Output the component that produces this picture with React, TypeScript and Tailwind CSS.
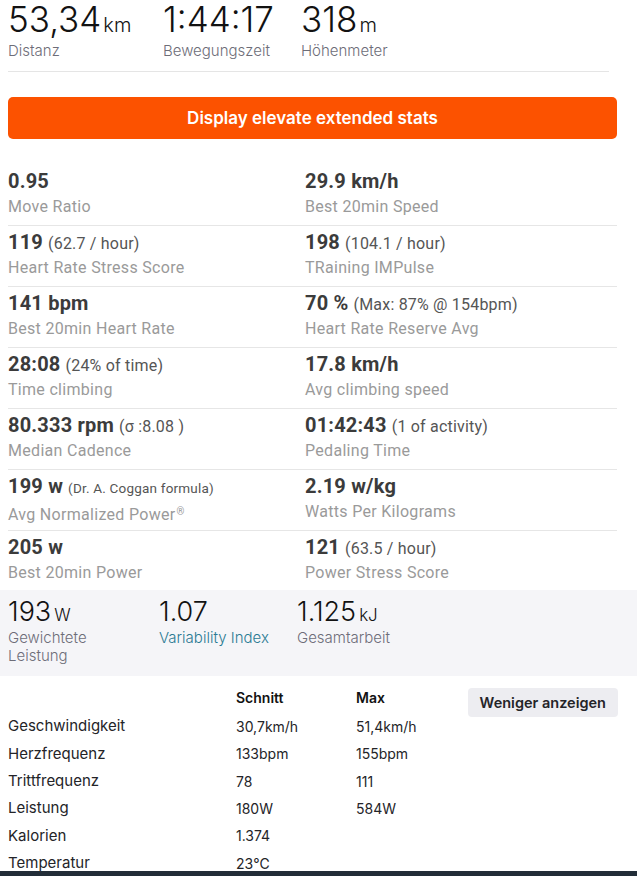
import React from 'react';

type Stat = { value: string; extra?: string; extraSmall?: boolean; label: React.ReactNode };

const ROWS: [Stat, Stat][] = [
  [
    { value: '0.95', label: 'Move Ratio' },
    { value: '29.9 km/h', label: 'Best 20min Speed' },
  ],
  [
    { value: '119', extra: '(62.7 / hour)', label: 'Heart Rate Stress Score' },
    { value: '198', extra: '(104.1 / hour)', label: 'TRaining IMPulse' },
  ],
  [
    { value: '141 bpm', label: 'Best 20min Heart Rate' },
    { value: '70 %', extra: '(Max: 87% @ 154bpm)', label: 'Heart Rate Reserve Avg' },
  ],
  [
    { value: '28:08', extra: '(24% of time)', label: 'Time climbing' },
    { value: '17.8 km/h', label: 'Avg climbing speed' },
  ],
  [
    { value: '80.333 rpm', extra: '(σ :8.08 )', label: 'Median Cadence' },
    { value: '01:42:43', extra: '(1 of activity)', label: 'Pedaling Time' },
  ],
  [
    {
      value: '199 w',
      extra: '(Dr. A. Coggan formula)',
      extraSmall: true,
      label: (
        <>
          Avg Normalized Power<span className="text-[10px] align-[5px] ml-[1px]">®</span>
        </>
      ),
    },
    { value: '2.19 w/kg', label: 'Watts Per Kilograms' },
  ],
  [
    { value: '205 w', label: 'Best 20min Power' },
    { value: '121', extra: '(63.5 / hour)', label: 'Power Stress Score' },
  ],
];

const TABLE = [
  ['Geschwindigkeit', '30,7km/h', '51,4km/h'],
  ['Herzfrequenz', '133bpm', '155bpm'],
  ['Trittfrequenz', '78', '111'],
  ['Leistung', '180W', '584W'],
  ['Kalorien', '1.374', ''],
  ['Temperatur', '23℃', ''],
];

function ElevateCell({ s }: { s: Stat }) {
  return (
    <div className="flex-1 min-w-0">
      <div className="h-[24px] flex items-baseline whitespace-nowrap">
        <span className="text-[20px] leading-[24px] font-bold text-[#3b3b3b] tracking-[0.2px]">{s.value}</span>
        {s.extra && (
          <span
            className={`${s.extraSmall ? 'text-[13.5px]' : 'text-[16px]'} leading-[24px] text-[#555] ml-[5px] tracking-[0.2px]`}
          >
            {s.extra}
          </span>
        )}
      </div>
      <div className="mt-[4px] h-[20px] text-[16px] leading-[20px] text-[#9a9a9a] tracking-[0.3px] whitespace-nowrap">
        {s.label}
      </div>
    </div>
  );
}

export default function App() {
  return (
    <div
      className="w-[637px] h-[876px] overflow-hidden bg-white flex flex-col"
      style={{ fontFamily: 'Roboto, "Noto Sans", sans-serif' }}
    >
      {/* Strava top stats */}
      <div className="px-[8px]">
        <div
          className="flex pt-[1px] pb-[9px] border-b border-[#e5e5e5] mr-[20px]"
          style={{ fontFamily: 'Inter, Roboto, sans-serif' }}
        >
          {[
            ['53,34', 'km', 'Distanz', 'w-[155px]'],
            ['1:44:17', '', 'Bewegungszeit', 'w-[138px]'],
            ['318', 'm', 'Höhenmeter', 'w-[140px]'],
          ].map(([v, u, l, w]) => (
            <div key={l} className={w}>
              <div className="h-[36px] flex items-baseline text-[#121212] whitespace-nowrap">
                <span className="text-[35px] leading-[36px] font-light">{v}</span>
                {u && <span className="text-[20px] leading-[36px] font-light ml-[2px]">{u}</span>}
              </div>
              <div className="mt-[3px] h-[22px] text-[15px] leading-[22px] text-[#6d6d78] font-light">{l}</div>
            </div>
          ))}
        </div>

        <button
          className="mt-[25px] w-[609px] h-[42px] rounded-[5px] bg-[#fc5200] text-white text-[17px] leading-[42px] font-semibold"
          style={{ fontFamily: 'Inter, Roboto, sans-serif' }}
        >
          Display elevate extended stats
        </button>

        {/* Elevate rows */}
        <div className="mt-[26px] w-[609px]">
          {ROWS.map((r, i) => (
            <div
              key={i}
              className={`flex pt-[4px] ${i < ROWS.length - 1 ? 'pb-[8px] border-b border-[#e6e6e6]' : 'pb-[7px]'}`}
            >
              <ElevateCell s={r[0]} />
              <div className="w-[312px]">
                <ElevateCell s={r[1]} />
              </div>
            </div>
          ))}
        </div>
      </div>

      {/* Gray band */}
      <div className="bg-[#f5f5f8] px-[8px] pt-[7px] h-[86px] shrink-0 flex" style={{ fontFamily: 'Inter, Roboto, sans-serif' }}>
        <div className="w-[151px]">
          <div className="h-[30px] flex items-baseline text-[#121212]">
            <span className="text-[27px] leading-[30px] font-light">193</span>
            <span className="text-[17px] leading-[30px] font-light ml-[3px]">W</span>
          </div>
          <div className="w-[100px] text-[15px] leading-[18px] text-[#6d6d78] font-light mt-[2px]">Gewichtete Leistung</div>
        </div>
        <div className="w-[138px]">
          <div className="h-[30px] flex items-baseline text-[#121212]">
            <span className="text-[27px] leading-[30px] font-light">1.07</span>
          </div>
          <div className="text-[15px] leading-[18px] text-[#2a7a93] font-light mt-[2px]">Variability Index</div>
        </div>
        <div>
          <div className="h-[30px] flex items-baseline text-[#121212]">
            <span className="text-[27px] leading-[30px] font-light">1.125</span>
            <span className="text-[17px] leading-[30px] font-light ml-[3px]">kJ</span>
          </div>
          <div className="text-[15px] leading-[18px] text-[#6d6d78] font-light mt-[2px]">Gesamtarbeit</div>
        </div>
      </div>

      {/* Table */}
      <div className="relative px-[8px] pt-[12px] flex-1 min-h-0 text-[14px] text-[#242428]" style={{ fontFamily: 'Inter, Roboto, sans-serif' }}>
        <button className="absolute right-[19px] top-[12px] h-[29px] px-[12px] rounded-[4px] bg-[#ededf1] text-[14.5px] font-semibold text-[#242428]">
          Weniger anzeigen
        </button>
        <div className="flex leading-[20px] font-semibold text-[#121212]">
          <div className="w-[228px]" />
          <div className="w-[120px]">Schnitt</div>
          <div>Max</div>
        </div>
        <div className="mt-[5px]">
          {TABLE.map(([a, b, c]) => (
            <div key={a} className="flex h-[27.3px] items-center">
              <div className="w-[228px] text-[15px]">{a}</div>
              <div className="w-[120px]">{b}</div>
              <div>{c}</div>
            </div>
          ))}
        </div>
      </div>
      <div className="h-[5px] bg-[#222d38] shrink-0" />
    </div>
  );
}
